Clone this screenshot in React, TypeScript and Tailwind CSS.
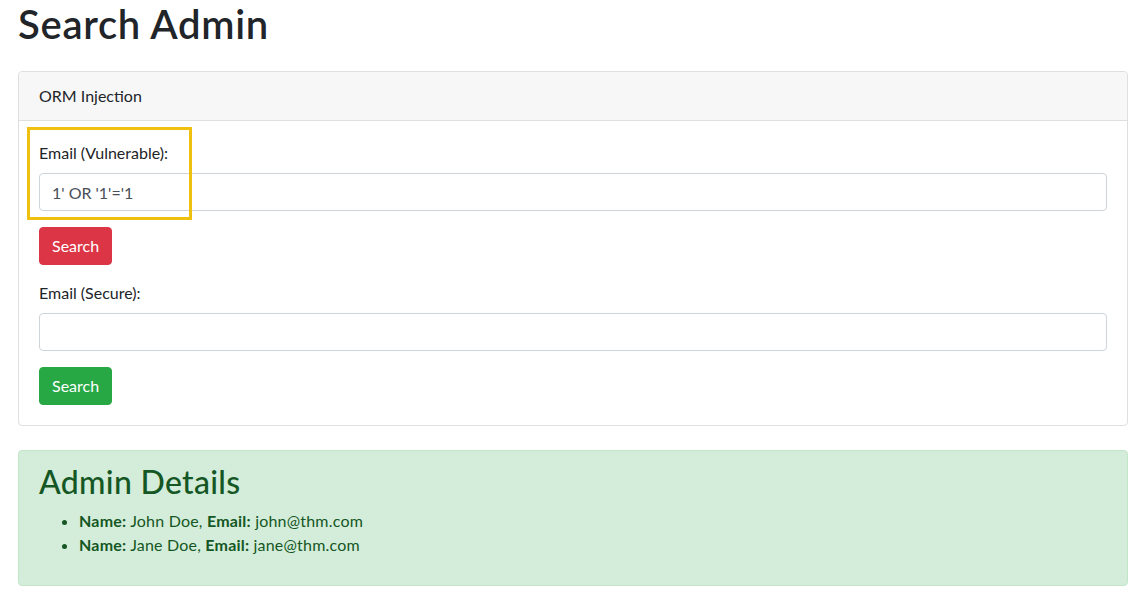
import React from 'react';

const font = { fontFamily: 'Lato, "Noto Sans", sans-serif' };

export default function App() {
  return (
    <div className="min-h-screen bg-white text-[#212529] text-base leading-6 px-[18px]" style={font}>
      <h1 className="text-[40px] leading-[48px] font-semibold tracking-[0.7px] mb-[23px]">Search Admin</h1>

      <div className="relative w-[1110px] border border-[#dfdfdf] rounded bg-white">
        <div className="px-5 py-3 bg-[#f7f7f7] border-b border-[#dfdfdf] rounded-t">ORM Injection</div>
        <div className="p-5">
          <form className="mb-0" onSubmit={(e) => e.preventDefault()}>
            <div className="mb-4">
              <label className="block mb-2">Email (Vulnerable):</label>
              <input
                type="text"
                defaultValue="1' OR '1'='1"
                className="block w-full h-[38px] px-3 py-1.5 border border-[#ced4da] rounded text-[#495057] outline-none"
                style={font}
              />
            </div>
            <button className="px-3 py-1.5 h-[38px] rounded bg-[#dc3545] text-white border border-[#dc3545]" style={font}>
              Search
            </button>
          </form>

          <form className="mt-4" onSubmit={(e) => e.preventDefault()}>
            <div className="mb-4">
              <label className="block mb-2">Email (Secure):</label>
              <input
                type="text"
                className="block w-full h-[38px] px-3 py-1.5 border border-[#ced4da] rounded text-[#495057] outline-none"
                style={font}
              />
            </div>
            <button className="px-3 py-1.5 h-[38px] rounded bg-[#28a745] text-white border border-[#28a745]" style={font}>
              Search
            </button>
          </form>
        </div>

        {/* annotation box */}
        <div className="absolute left-[8px] top-[55px] w-[165px] h-[93px] border-[3px] border-[#f0c010] pointer-events-none" />
      </div>

      <div className="w-[1110px] mt-6 px-5 py-3 bg-[#d4edda] border border-[#c3e6cb] rounded text-[#155724]">
        <h2 className="text-[32px] leading-[38px] font-medium tracking-[0.3px] mb-2">Admin Details</h2>
        <ul className="list-disc pl-10 mb-4 tracking-[0.2px]">
          <li>
            <strong className="font-bold">Name:</strong> John Doe, <strong className="font-bold">Email:</strong> john@thm.com
          </li>
          <li>
            <strong className="font-bold">Name:</strong> Jane Doe, <strong className="font-bold">Email:</strong> jane@thm.com
          </li>
        </ul>
      </div>
    </div>
  );
}
